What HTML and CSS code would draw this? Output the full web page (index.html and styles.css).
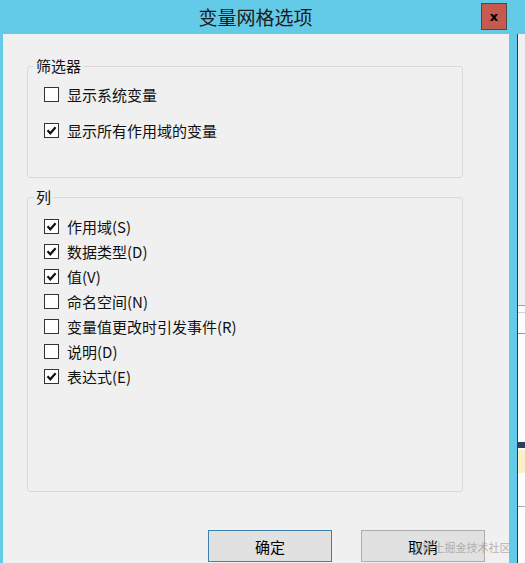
FILE: index.html
```html
<!DOCTYPE html>
<html lang="zh-CN">
<head>
    <meta charset="UTF-8">
    <title>变量网格选项</title>
    <link rel="stylesheet" href="styles.css">
</head>
<body>
    <div class="window">
        <div class="titlebar">
            <div class="title">变量网格选项</div>
            <div class="close">x</div>
        </div>

        <div class="frame">
            <div class="dialog">
                <fieldset class="group group-filter">
                    <legend>筛选器</legend>
                    <div class="rows rows-filter">
                        <label class="check"><span class="box"></span>显示系统变量</label>
                        <label class="check"><span class="box"><svg viewBox="0 0 13 13"><path d="M2.5 6.3 L5.3 9.3 L10.6 3.2"/></svg></span>显示所有作用域的变量</label>
                    </div>
                </fieldset>

                <fieldset class="group group-columns">
                    <legend>列</legend>
                    <div class="rows rows-columns">
                        <label class="check"><span class="box"><svg viewBox="0 0 13 13"><path d="M2.5 6.3 L5.3 9.3 L10.6 3.2"/></svg></span>作用域(S)</label>
                        <label class="check"><span class="box"><svg viewBox="0 0 13 13"><path d="M2.5 6.3 L5.3 9.3 L10.6 3.2"/></svg></span>数据类型(D)</label>
                        <label class="check"><span class="box"><svg viewBox="0 0 13 13"><path d="M2.5 6.3 L5.3 9.3 L10.6 3.2"/></svg></span>值(V)</label>
                        <label class="check"><span class="box"></span>命名空间(N)</label>
                        <label class="check"><span class="box"></span>变量值更改时引发事件(R)</label>
                        <label class="check"><span class="box"></span>说明(D)</label>
                        <label class="check"><span class="box"><svg viewBox="0 0 13 13"><path d="M2.5 6.3 L5.3 9.3 L10.6 3.2"/></svg></span>表达式(E)</label>
                    </div>
                </fieldset>

                <div class="buttons">
                    <button class="btn btn-default">确定</button>
                    <button class="btn">取消</button>
                </div>

                <div class="watermark">@稀土掘金技术社区</div>
            </div>
            <div class="edge"></div>
            <div class="behind"></div>
        </div>
    </div>
</body>
</html>
```

FILE: styles.css
```css
body {
    margin: 0;
    font-family: "Noto Sans CJK SC", sans-serif;
    background: #63cbe8;
}
.window {
    width: 525px;
    height: 563px;
    overflow: hidden;
    display: flex;
    flex-direction: column;
    background: #63cbe8;
}
.titlebar {
    height: 34px;
    flex: none;
    display: flex;
    align-items: flex-start;
}
.title {
    flex: 1;
    padding-left: 30px;
    text-align: center;
    font-size: 19px;
    line-height: 33px;
    color: #1b1b1b;
}
.close {
    width: 24px;
    height: 25px;
    margin: 3px 18px 0 0;
    background: #c75a4e;
    border: 1px solid #4a4a4a;
    display: flex;
    align-items: center;
    justify-content: center;
    font-family: "DejaVu Sans", sans-serif;
    font-weight: bold;
    font-size: 13px;
    line-height: 1;
    color: #000;
}
.frame {
    flex: 1;
    display: flex;
    padding-left: 3px;
}
.dialog {
    position: relative;
    width: 506px;
    box-sizing: border-box;
    padding: 23px 24px 0 24px;
    background: #f0f0f0;
}
.edge {
    width: 8px;
    border-right: 1px solid #2c3e4a;
}
.behind {
    flex: 1;
    background: linear-gradient(to bottom,
        #f0f0f0 0, #f0f0f0 271px,
        #a0a0a0 271px, #a0a0a0 272px,
        #ffffff 272px, #ffffff 278px,
        #d0d0d0 278px, #d0d0d0 279px,
        #ffffff 279px, #ffffff 299px,
        #999999 299px, #999999 300px,
        #ffffff 300px, #ffffff 408px,
        #2d3e5e 408px, #2d3e5e 414px,
        #ffffff 414px, #ffffff 416px,
        #fdefc4 416px, #fdefc4 439px,
        #ffffff 439px, #ffffff 472px,
        #aaaaaa 472px, #aaaaaa 473px,
        #ffffff 473px);
}
.group {
    width: 436px;
    box-sizing: border-box;
    margin: 0;
    border: 1px solid #d9d9d9;
    border-radius: 3px;
    padding: 9px 0 37px 16px;
}
.group legend {
    margin-left: -10px;
    padding: 0 2px;
    font-size: 15px;
    line-height: 18px;
    color: #111;
}
.group-columns {
    margin-top: 10px;
    padding-top: 10px;
    padding-bottom: 105px;
}
.rows {
    display: flex;
    flex-direction: column;
}
.rows-filter {
    gap: 16px;
}
.rows-columns {
    gap: 5px;
}
.check {
    display: flex;
    align-items: center;
    gap: 8px;
    height: 20px;
    font-size: 15px;
    color: #111;
}
.box {
    width: 13px;
    height: 13px;
    border: 1px solid #333;
    background: #fff;
    display: flex;
}
.box svg {
    width: 13px;
    height: 13px;
}
.box path {
    fill: none;
    stroke: #111;
    stroke-width: 2.2;
}
.buttons {
    display: flex;
    justify-content: flex-end;
    gap: 29px;
    margin-top: 38px;
}
.btn {
    width: 124px;
    height: 32px;
    background: #e1e1e1;
    border: 1px solid #adadad;
    font-family: "Noto Sans CJK SC", sans-serif;
    font-size: 15px;
    color: #000;
    padding: 0;
}
.btn-default {
    border-color: #3c7fb1;
}
.watermark {
    position: absolute;
    left: 409px;
    top: 505px;
    white-space: nowrap;
    font-size: 11px;
    line-height: 16px;
    color: rgba(150, 150, 150, 0.7);
}
```
